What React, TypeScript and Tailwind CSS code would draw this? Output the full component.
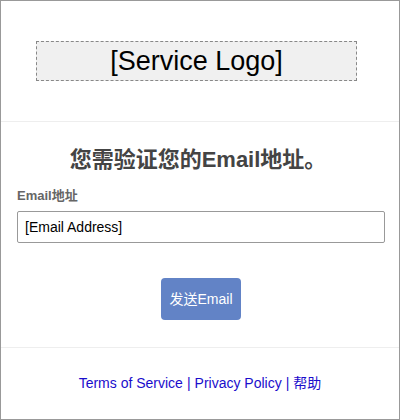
export default function App() {
  return (
    <div className="flex h-[420px] w-[400px] flex-col border border-[#999] bg-white font-['Liberation_Sans','Noto_Sans_CJK_SC',sans-serif]">
      <header className="flex h-[121px] items-center border-b border-[#eee] pl-[35px]">
        <div className="flex h-[40px] w-[321px] items-center justify-center border border-dashed border-[#888] bg-[#f0f0f0] text-[27px] leading-none text-black">
          [Service Logo]
        </div>
      </header>

      <main className="border-b border-[#eee] px-[16px] pb-[27px] pt-[25px]">
        <h1 className="pr-[4px] text-center text-[22px] font-bold leading-[26px] text-[#444]">
          您需验证您的Email地址。
        </h1>
        <label className="mt-[15px] block text-[13px] font-bold leading-[16px] text-[#666]">
          Email地址
        </label>
        <input
          className="mt-[7px] block h-[32px] w-[368px] rounded-[2px] border border-[#999] px-[7px] text-[14px] text-black outline-none"
          defaultValue="[Email Address]"
        />
        <div className="mt-[35px] flex justify-center">
          <button className="ml-[2px] h-[42px] rounded-[4px] bg-[#6283c6] px-[8px] text-[14px] text-white">
            发送Email
          </button>
        </div>
      </main>

      <footer className="flex flex-1 items-center justify-center text-[14px] text-[#1a0dcc]">
        <a href="#">Terms of Service</a>
        <span className="px-[4px]">|</span>
        <a href="#">Privacy Policy</a>
        <span className="px-[4px]">|</span>
        <a href="#">帮助</a>
      </footer>
    </div>
  );
}
